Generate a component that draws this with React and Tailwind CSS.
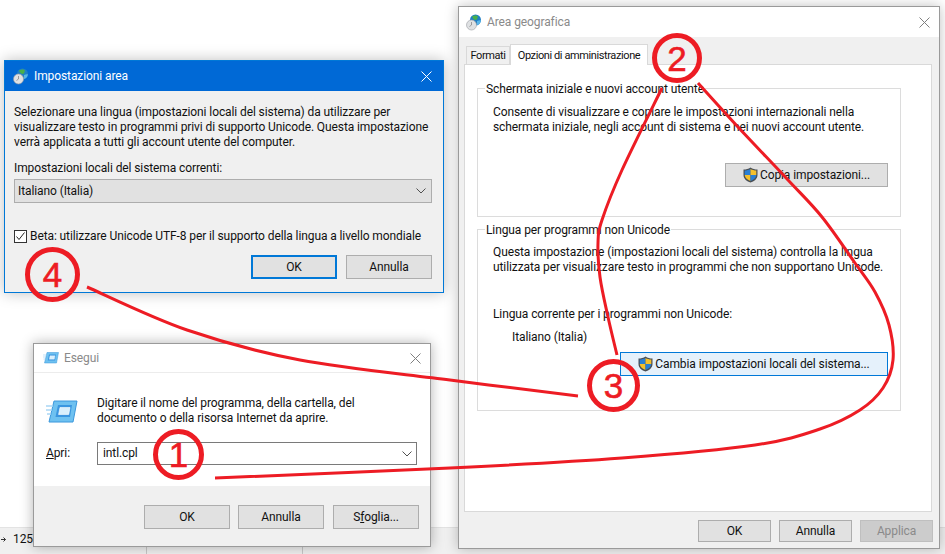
const font = { fontFamily: 'Roboto, sans-serif' };

// catmull-rom through the hand-read points of the scribbles
function smooth(pts) {
  let d = `M${pts[0][0]} ${pts[0][1]}`;
  for (let i = 0; i < pts.length - 1; i++) {
    const p0 = pts[i - 1] || pts[i];
    const p1 = pts[i];
    const p2 = pts[i + 1];
    const p3 = pts[i + 2] || p2;
    const c1 = [p1[0] + (p2[0] - p0[0]) / 6, p1[1] + (p2[1] - p0[1]) / 6];
    const c2 = [p2[0] - (p3[0] - p1[0]) / 6, p2[1] - (p3[1] - p1[1]) / 6];
    d += ` C${c1[0]} ${c1[1]} ${c2[0]} ${c2[1]} ${p2[0]} ${p2[1]}`;
  }
  return d;
}

const line4to3 = [[87, 287], [187, 330], [300, 360], [450, 380], [578, 396]];
const line1to2 = [
  [215, 478], [450, 468], [622, 458], [755, 445], [820, 429], [860, 410], [883, 388], [893, 360],
  [889, 325], [875, 292], [855, 263], [822, 217], [788, 180], [738, 127], [698, 83],
];
const line3to2 = [[617, 355], [608, 317], [600, 277], [598, 243], [602, 220], [622, 170], [662, 88]];

function Scribbles() {
  return (
    <svg className="absolute left-0 top-0 z-40" width="945" height="554" fill="none" stroke="#ed1c24" strokeWidth="3">
      <path d={smooth(line4to3)} />
      <path d={smooth(line1to2)} />
      <path d={smooth(line3to2)} />
    </svg>
  );
}

function Badge({ n, className }) {
  return (
    <div
      className={`absolute z-50 flex items-center justify-center rounded-full border-[5px] border-[#ed1c24] text-[#ed1c24] text-[35px] leading-none tracking-normal [-webkit-text-stroke:0.6px_#ed1c24] ${className}`}
      style={{ fontFamily: '"Liberation Sans", sans-serif' }}
    >
      {n}
    </div>
  );
}

function CloseX({ color = "#7f7f7f" }) {
  return (
    <svg width="11" height="11" viewBox="0 0 11 11" stroke={color} strokeWidth="1" fill="none">
      <path d="M0.5 0.5L10.5 10.5M10.5 0.5L0.5 10.5" />
    </svg>
  );
}

function Chevron() {
  return (
    <svg width="10" height="6" viewBox="0 0 10 6" stroke="#505050" strokeWidth="1" fill="none">
      <path d="M0.5 0.5L5 5L9.5 0.5" />
    </svg>
  );
}

function GlobeIcon() {
  return (
    <svg width="16" height="17" viewBox="0 0 16 17">
      <circle cx="9.5" cy="6" r="5.5" fill="#1f7fc4" />
      <path d="M6 2.5C8 1 11 1 12 2.5C11 4 12 5 10 6C8 6 7 5 6 2.5Z" fill="#49b04a" />
      <path d="M11 7C13 6 14.5 6 15 6.5C14.5 9 13 10.5 11 11Z" fill="#57b5e8" />
      <circle cx="5.5" cy="11" r="5" fill="#dfe1e3" stroke="#9a9ea2" strokeWidth="0.6" />
      <path d="M5.5 8V11L3.5 12.5" stroke="#888" strokeWidth="0.8" fill="none" />
    </svg>
  );
}

function RunIcon({ size = 32 }) {
  return (
    <svg width={size} height={size * 0.72} viewBox="0 0 32 23">
      <path d="M8 1H31L27 22H3Z" fill="#6ec1f0" stroke="#3b97dc" strokeWidth="1" />
      <path d="M12 5H26L24 17H9.5Z" fill="#3a96e0" />
      <path d="M14 7.5H24L22.7 14.5H12.6Z" fill="#d9effc" stroke="#fff" strokeWidth="0.6" />
      <path d="M0 6H7M0 10H6M1 14H5" stroke="#a9d6f5" strokeWidth="1.4" />
    </svg>
  );
}

function Shield() {
  return (
    <svg width="15" height="16" viewBox="0 0 15 16">
      <path d="M7.5 0.5C9.5 2 12 2.5 14.5 2.5V8C14.5 12 11 14.5 7.5 15.5C4 14.5 0.5 12 0.5 8V2.5C3 2.5 5.5 2 7.5 0.5Z" fill="#4a4f55" />
      <path d="M7.5 2V8H1.7V3.6C3.7 3.4 5.8 3 7.5 2Z" fill="#2a7fd4" />
      <path d="M7.5 2V8H13.3V3.6C11.3 3.4 9.2 3 7.5 2Z" fill="#f5c02b" />
      <path d="M1.7 8H7.5V14C4.5 13 1.9 11 1.7 8Z" fill="#f5c02b" />
      <path d="M13.3 8H7.5V14C10.5 13 13.1 11 13.3 8Z" fill="#2a7fd4" />
    </svg>
  );
}

function Btn({ children, w = "w-[86px]", h = "h-6", className = "border-[#adadad] bg-[#e1e1e1]" }) {
  return (
    <div className={`${w} ${h} flex items-center justify-center gap-[2px] border ${className}`}>
      {children}
    </div>
  );
}

function Legend({ children }) {
  return <div className="-mt-[7px] ml-[7px] w-fit bg-white px-px h-[15px] leading-[15px]">{children}</div>;
}

export default function App() {
  return (
    <div className="relative w-[945px] h-[554px] overflow-hidden bg-white text-[12px] leading-[15px] tracking-[-0.1px] text-[#111] whitespace-nowrap" style={font}>
      {/* what is left of the window underneath */}
      <div className="absolute left-0 right-0 bottom-0 h-[27px] flex items-start gap-[7px] border-t border-[#e3e3e3] bg-[#f0f0f0] pl-[1px] pt-[4px]">
        <svg className="mt-[4px]" width="5" height="7" viewBox="0 0 5 7" fill="none" stroke="#333" strokeWidth="1">
          <path d="M0 3.5H4.5M2.5 1.5L4.5 3.5L2.5 5.5" />
        </svg>
        <span>1254</span>
      </div>
      <div className="absolute left-[146px] bottom-0 h-[7px] w-px bg-[#c8c8c8]" />
      <div className="absolute left-[302px] bottom-0 h-[7px] w-px bg-[#c8c8c8]" />

      {/* Impostazioni area */}
      <div className="absolute left-[4px] top-[60px] z-10 w-[440px] h-[233px] flex flex-col border border-[#0078d7] bg-[#f0f0f0] shadow-[0_0_14px_rgba(0,0,0,0.25)]">
        <div className="h-[30px] shrink-0 flex items-center gap-[5px] bg-[#0069d6] pl-[8px] pr-[11px] text-white">
          <GlobeIcon />
          <span className="flex-1">Impostazioni area</span>
          <CloseX color="#ffffff" />
        </div>
        <div className="flex flex-col pl-[9px] pr-[11px]">
          <p className="mt-[14px]">
            Selezionare una lingua (impostazioni locali del sistema) da utilizzare per
            <br />
            visualizzare testo in programmi privi di supporto Unicode. Questa impostazione
            <br />
            verrà applicata a tutti gli account utente del computer.
          </p>
          <div className="mt-[11px]">Impostazioni locali del sistema correnti:</div>
          <div className="mt-[3px] h-6 flex items-center justify-between border border-[#adadad] bg-[#e1e1e1] pl-[3px] pr-[5px]">
            <span>Italiano (Italia)</span>
            <Chevron />
          </div>
          <div className="mt-[26px] flex items-center gap-[3px]">
            <div className="w-[13px] h-[13px] flex items-center justify-center border border-[#333] bg-white">
              <svg width="11" height="11" viewBox="0 0 11 11" fill="none" stroke="#222" strokeWidth="1">
                <path d="M1.5 5.5L4 8.5L9.5 1.5" />
              </svg>
            </div>
            <span>Beta: utilizzare Unicode UTF-8 per il supporto della lingua a livello mondiale</span>
          </div>
          <div className="mt-[11px] flex justify-end gap-[9px]">
            <Btn className="border-2 border-[#0078d7] bg-[#e1e1e1]">OK</Btn>
            <Btn>Annulla</Btn>
          </div>
        </div>
      </div>

      {/* Esegui */}
      <div className="absolute left-[33px] top-[343px] z-20 w-[398px] h-[204px] flex flex-col border border-[#9a9a9a] bg-white shadow-[0_0_12px_rgba(0,0,0,0.3)]">
        <div className="h-[29px] shrink-0 flex items-center gap-[5px] border-b border-[#ececec] pl-[9px] pr-[9px] text-[#8a8a8a]">
          <RunIcon size={16} />
          <span className="flex-1">Esegui</span>
          <CloseX />
        </div>
        <div className="flex pl-[12px] pt-[23px]">
          <div className="w-[51px] pt-[4px]">
            <RunIcon />
          </div>
          <p>
            Digitare il nome del programma, della cartella, del
            <br />
            documento o della risorsa Internet da aprire.
          </p>
        </div>
        <div className="mt-[16px] flex items-center pl-[12px]">
          <span className="w-[51px]">
            <u>A</u>pri:
          </span>
          <div className="w-[320px] h-[23px] flex items-center justify-between border border-[#7a7a7a] pl-[5px] pr-[4px]">
            <span>intl.cpl</span>
            <Chevron />
          </div>
        </div>
        <div className="mt-[21px] flex-1 flex justify-end gap-[8px] bg-[#f0f0f0] pt-[19px] pr-[11px]">
          <Btn>OK</Btn>
          <Btn>Annulla</Btn>
          <div className="ml-px">
            <Btn>
              <span>
                S<u>f</u>oglia...
              </span>
            </Btn>
          </div>
        </div>
      </div>

      {/* Area geografica */}
      <div className="absolute left-[458px] top-[6px] z-10 w-[482px] h-[543px] flex flex-col border border-[#9a9a9a] bg-[#f0f0f0] shadow-[0_0_12px_rgba(0,0,0,0.25)]">
        <div className="h-[30px] shrink-0 flex items-center gap-[5px] bg-white pl-[7px] pr-[9px] text-[#8a8a8a]">
          <GlobeIcon />
          <span className="flex-1">Area geografica</span>
          <CloseX />
        </div>
        <div className="h-[27px] shrink-0 flex items-end pl-[7px] text-[11px] tracking-[-0.4px]">
          <div className="w-[44px] h-[18px] flex items-center justify-center border border-b-0 border-[#d9d9d9] bg-[#f0f0f0]">Formati</div>
          <div className="relative z-10 -mb-px w-[138px] h-[21px] flex items-center justify-center border border-b-0 border-[#d9d9d9] bg-white">
            Opzioni di amministrazione
          </div>
        </div>
        <div className="ml-[5px] w-[468px] h-[448px] shrink-0 border border-[#d9d9d9] bg-white pl-[12px] flow-root">
          <div className="mt-[23px] w-[424px] h-[129px] flex flex-col border border-[#dcdcdc]">
            <Legend>Schermata iniziale e nuovi account utente</Legend>
            <p className="mt-[8px] ml-[15px]">
              Consente di visualizzare e copiare le impostazioni internazionali nella
              <br />
              schermata iniziale, negli account di sistema e nei nuovi account utente.
            </p>
            <div className="mt-[28px] mr-[12px] self-end">
              <Btn w="w-[163px]">
                <Shield />
                <span>Copia impostazioni...</span>
              </Btn>
            </div>
          </div>
          <div className="mt-[12px] w-[424px] h-[182px] flex flex-col border border-[#dcdcdc]">
            <Legend>Lingua per programmi non Unicode</Legend>
            <p className="mt-[7px] ml-[15px]">
              Questa impostazione (impostazioni locali del sistema) controlla la lingua
              <br />
              utilizzata per visualizzare testo in programmi che non supportano Unicode.
            </p>
            <div className="mt-[32px] ml-[15px]">Lingua corrente per i programmi non Unicode:</div>
            <div className="mt-[8px] ml-[34px]">Italiano (Italia)</div>
            <div className="mt-[7px] mr-[12px] self-end">
              <Btn w="w-[268px]" className="border-[#0078d7] bg-[#e5f1fb]">
                <Shield />
                <span>Cambia impostazioni locali del sistema...</span>
              </Btn>
            </div>
          </div>
        </div>
        <div className="mt-[8px] flex justify-end gap-[8px] pr-[6px]">
          <Btn w="w-[73px]" h="h-[22px]">OK</Btn>
          <Btn w="w-[73px]" h="h-[22px]">Annulla</Btn>
          <Btn w="w-[73px]" h="h-[22px]" className="border-[#bfbfbf] bg-[#cccccc] text-[#8a8a8a]">Applica</Btn>
        </div>
      </div>

      <Scribbles />
      <Badge n="4" className="left-[25px] top-[247px] w-[55px] h-[55px]" />
      <Badge n="1" className="left-[153px] top-[429px] w-[51px] h-[51px]" />
      <Badge n="2" className="left-[652px] top-[33px] w-[50px] h-[50px]" />
      <Badge n="3" className="left-[587px] top-[359px] w-[53px] h-[53px]" />
    </div>
  );
}
